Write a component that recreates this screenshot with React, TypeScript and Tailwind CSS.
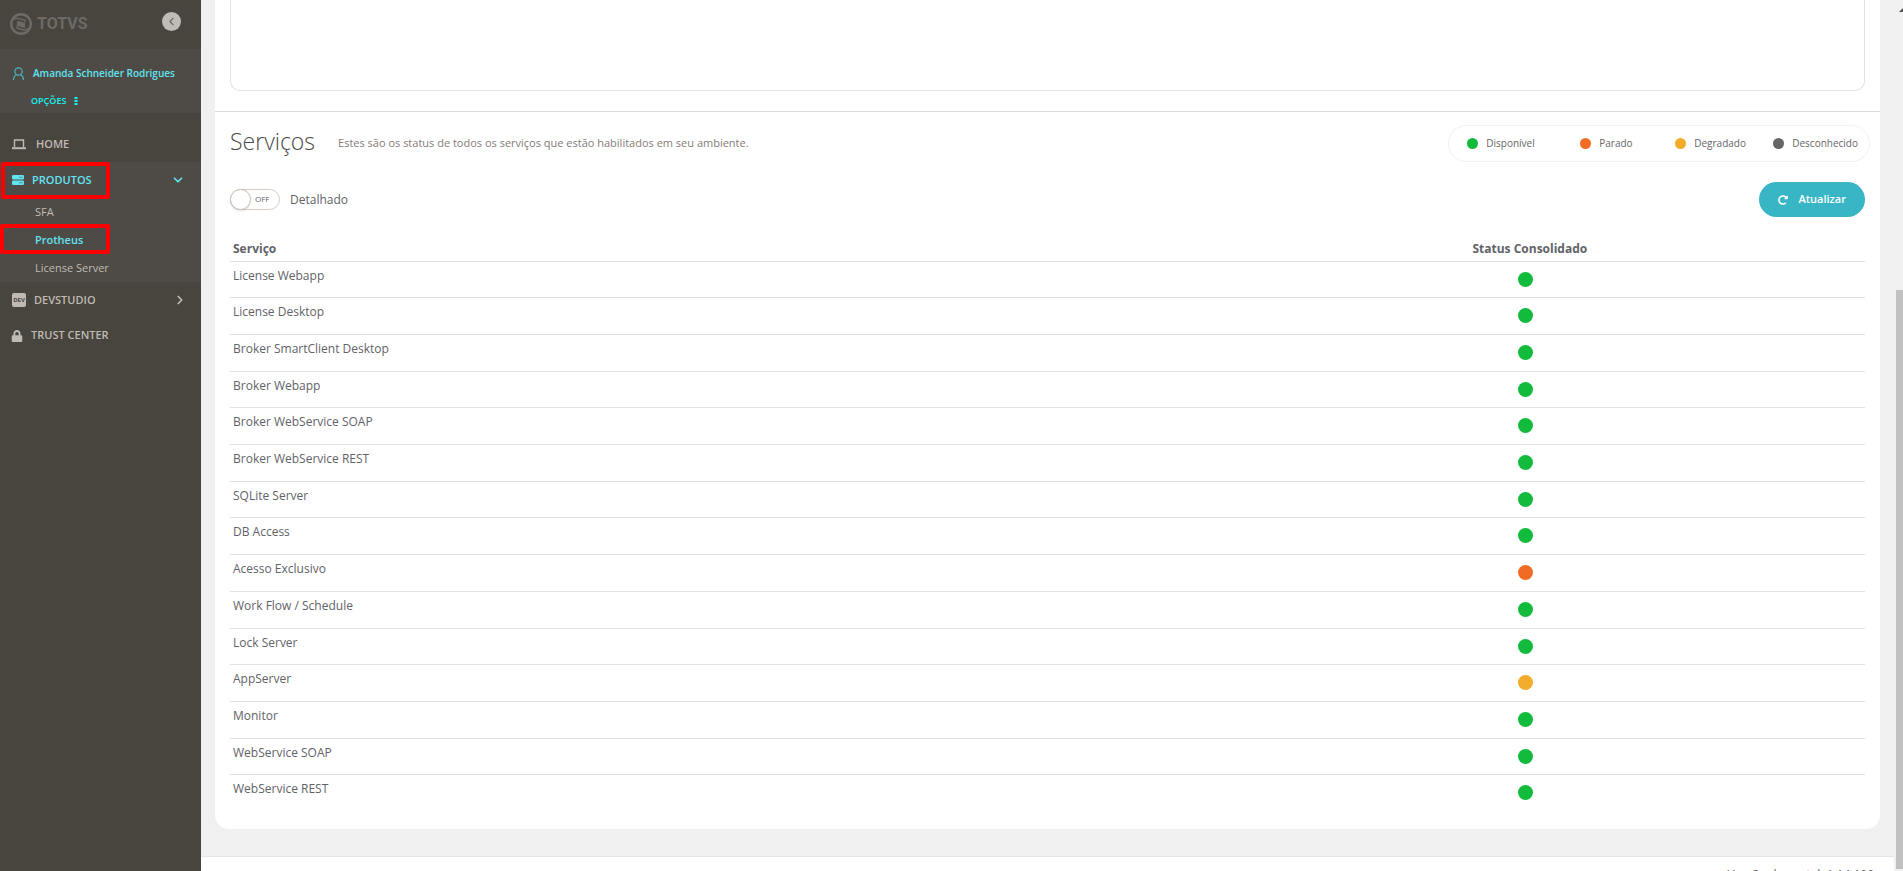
import { useState } from 'react'
import { FaLock, FaRedoAlt } from 'react-icons/fa'
import { ChevronDown, ChevronLeft, ChevronRight } from 'lucide-react'

type Status = 'up' | 'down' | 'degraded' | 'unknown'

const statusColor: Record<Status, string> = {
  up: 'bg-[#13bb3c]',
  down: 'bg-[#f26b25]',
  degraded: 'bg-[#f2ac29]',
  unknown: 'bg-[#666666]',
}

const legend: { label: string; status: Status }[] = [
  { label: 'Disponível', status: 'up' },
  { label: 'Parado', status: 'down' },
  { label: 'Degradado', status: 'degraded' },
  { label: 'Desconhecido', status: 'unknown' },
]

const services: { name: string; status: Status }[] = [
  { name: 'License Webapp', status: 'up' },
  { name: 'License Desktop', status: 'up' },
  { name: 'Broker SmartClient Desktop', status: 'up' },
  { name: 'Broker Webapp', status: 'up' },
  { name: 'Broker WebService SOAP', status: 'up' },
  { name: 'Broker WebService REST', status: 'up' },
  { name: 'SQLite Server', status: 'up' },
  { name: 'DB Access', status: 'up' },
  { name: 'Acesso Exclusivo', status: 'down' },
  { name: 'Work Flow / Schedule', status: 'up' },
  { name: 'Lock Server', status: 'up' },
  { name: 'AppServer', status: 'degraded' },
  { name: 'Monitor', status: 'up' },
  { name: 'WebService SOAP', status: 'up' },
  { name: 'WebService REST', status: 'up' },
]

function Logo() {
  return (
    <a href="#" className="flex items-center gap-1 text-[#6d6a66]">
      <svg viewBox="0 0 24 24" className="size-6" fill="none" stroke="currentColor">
        <circle cx="12" cy="12" r="9.8" strokeWidth="2.4" />
        <path d="M2.5 8 L8 6.2 L16 8.4 V10 M8 14 V16 L15.5 18.2 L21.5 16" strokeWidth="1.4" />
        <path d="M8 8.8 L16 10.8 L16 16 L8 13.8 Z" fill="currentColor" stroke="none" />
      </svg>
      <span className="font-[Roboto] text-base leading-6 font-bold">TOTVS</span>
    </a>
  )
}

function Sidebar() {
  return (
    <aside className="flex w-[201px] shrink-0 flex-col bg-[#48443e] text-[#bfbab4]">
      <div className="flex h-[49px] items-start justify-between pt-3 pr-5 pl-[9px]">
        <Logo />
        <button
          type="button"
          aria-label="Recolher menu"
          className="flex size-[19px] items-center justify-center rounded-full bg-[#bfbbb6] text-[#6b6762]"
        >
          <ChevronLeft size={13} />
        </button>
      </div>

      <div className="h-16 bg-[#4e4a45] pt-4 pl-3 font-semibold">
        <a href="#" className="flex items-center gap-2 text-[10px] leading-4 whitespace-nowrap text-[#62e3f2]">
          <svg viewBox="0 0 13 13" className="size-[13px] shrink-0" fill="none" stroke="#4bb3bd" strokeWidth="1.2">
            <circle cx="6.5" cy="4.5" r="3.7" />
            <path d="M1.5 13 C1.5 10 3 8.5 4.5 7.8 M11.5 13 C11.5 10 10 8.5 8.5 7.8" />
          </svg>
          Amanda Schneider Rodrigues
        </a>
        <button type="button" className="mt-3 ml-[19px] flex items-center gap-2 text-[9px] leading-4 text-[#14f1ee]">
          OPÇÕES
          <svg viewBox="0 0 4 8" className="h-2 w-1" fill="currentColor">
            <path d="M0.5 0h3v2h-3z M0.5 3h3v2h-3z M0.5 6h3v2h-3z" />
          </svg>
        </button>
      </div>

      <nav className="pt-3 text-[11px] font-semibold">
        <a href="#" className="flex h-[37px] items-center gap-2.5 pt-px pl-3">
          <svg viewBox="0 0 14 11" className="h-[11px] w-3.5" fill="none" stroke="currentColor">
            <path d="M2.5 8 V1 H11.5 V8" strokeWidth="1.4" />
            <path d="M0 9.2 H14" strokeWidth="2" />
          </svg>
          HOME
        </a>

        <div className="bg-[#4e4a45]">
          <a href="#" className="relative flex h-9 items-center gap-2 pr-4 pl-3 text-[#62e3f2]">
            <svg viewBox="0 0 12 10" className="h-2.5 w-3" fill="currentColor">
              <rect width="12" height="4.4" rx="1.2" />
              <rect y="5.6" width="12" height="4.4" rx="1.2" />
              <path d="M7.5 1.8h1v1h-1z M9.5 1.8h1v1h-1z M7.5 7.3h1v1h-1z M9.5 7.3h1v1h-1z" fill="#4e4a45" />
            </svg>
            PRODUTOS
            <ChevronDown size={14} strokeWidth={3} className="ml-auto" />
            <span className="absolute top-0 left-px h-[37px] w-[109px] rounded-xs border-4 border-[#ff0000]" />
          </a>
          <ul className="font-normal">
            <li>
              <a href="#" className="flex h-7 items-center pl-[35px]">SFA</a>
            </li>
            <li>
              <a href="#" className="relative flex h-7 items-center pl-[35px] font-semibold text-[#62e3f2]">
                Protheus
                <span className="absolute -top-0.5 left-0 h-[30px] w-[110px] rounded-xs border-4 border-[#ff0000]" />
              </a>
            </li>
            <li>
              <a href="#" className="flex h-7 items-center pl-[35px]">License Server</a>
            </li>
          </ul>
        </div>

        <a href="#" className="flex h-9 items-center gap-2 pr-3.5 pl-3">
          <span className="flex size-3.5 items-center justify-center rounded-xs bg-[#bfbab4] text-[6px] font-bold text-[#48443e]">
            DEV
          </span>
          DEVSTUDIO
          <ChevronRight size={14} strokeWidth={3} className="ml-auto" />
        </a>
        <a href="#" className="flex h-[35px] items-center gap-2 pl-[11px]">
          <FaLock size={12} />
          TRUST CENTER
        </a>
      </nav>
    </aside>
  )
}

function Legend() {
  return (
    <ul className="grid h-[37px] grid-cols-[113px_95px_98px_auto] items-center rounded-full border border-[#f2f2f2] pr-[11px] pl-[18px] text-[10px] text-[#666]">
      {legend.map((item) => (
        <li key={item.label} className="flex items-center gap-2">
          <span className={`size-[11px] rounded-full ${statusColor[item.status]}`} />
          {item.label}
        </li>
      ))}
    </ul>
  )
}

function ServicesTable() {
  return (
    <table className="h-[575px] w-full text-left text-xs text-[#5f6368]">
      <thead>
        <tr className="h-[25px]">
          <th className="w-[59%] pt-px pl-[3px] font-bold">Serviço</th>
          <th className="pt-px text-center font-bold">Status Consolidado</th>
        </tr>
      </thead>
      <tbody>
        {services.map((service) => (
          <tr key={service.name} className="border-t border-[#dee2e6]">
            <td className="pt-1.5 pl-[3px] align-top leading-4">{service.name}</td>
            <td className="pt-2.5 pr-2 align-top">
              <span className={`mx-auto block size-[15px] rounded-full ${statusColor[service.status]}`} />
            </td>
          </tr>
        ))}
      </tbody>
    </table>
  )
}

export default function App() {
  const [detailed, setDetailed] = useState(false)

  return (
    <div className="flex h-screen overflow-hidden bg-[#f0f0f0] font-['Open_Sans',sans-serif]">
      <Sidebar />

      <div className="flex min-w-0 flex-1 flex-col">
        <main className="mr-4 ml-3.5 shrink-0 rounded-b-[14px] bg-white">
          <div className="border-b border-[#dcdcdc] px-[15px] pb-5">
            <div className="h-[91px] rounded-b-[10px] border border-t-0 border-[#e2e2e2]" />
          </div>

          <section className="px-[15px] pb-[18px]">
            <div className="-mr-[5px] flex items-start pt-[13px]">
              <h2 className="text-[23px] leading-8 font-light text-[#4a4a4a]">Serviços</h2>
              <p className="ml-[23px] pt-2 text-[11px] leading-5 text-[#857b78]">
                Estes são os status de todos os serviços que estão habilitados em seu ambiente.
              </p>
              <div className="ml-auto">
                <Legend />
              </div>
            </div>

            <div className="mt-5 flex items-center justify-between">
              <label className="flex items-center gap-2.5 text-xs text-[#5f6368]">
                <input
                  type="checkbox"
                  checked={detailed}
                  onChange={(e) => setDetailed(e.target.checked)}
                  className="peer sr-only"
                />
                <span className="flex h-[21px] w-[50px] items-center gap-1 rounded-full border border-[#d5cdc5] text-[8px] peer-checked:flex-row-reverse">
                  <span className="-ml-px size-[21px] rounded-full border border-[#c9c0b8] bg-white shadow" />
                  {detailed ? 'ON' : 'OFF'}
                </span>
                Detalhado
              </label>
              <button
                type="button"
                className="flex h-[35px] items-center gap-2.5 rounded-full bg-[#38b6c5] px-[19px] text-[11px] font-semibold text-white"
              >
                <FaRedoAlt size={10} />
                Atualizar
              </button>
            </div>

            <div className="mt-[19px]">
              <ServicesTable />
            </div>
          </section>
        </main>

        <footer className="mt-[27px] mr-0.5 shrink-0 border-t border-[#e4e4e4] bg-white pt-2.5 pr-5 text-right text-xs leading-4 text-[#666]">
          Versão do portal: 1.14.100
        </footer>
      </div>

      <div className="flex w-[7px] shrink-0 flex-col overflow-hidden pb-0.5">
        <svg viewBox="0 0 7 12" className="h-3 w-[7px] shrink-0" fill="#505050">
          <path d="M3 12 L7 8 V12 Z" />
        </svg>
        <div className="mt-auto h-2/3 bg-[#c1c1c1]" />
      </div>
    </div>
  )
}
